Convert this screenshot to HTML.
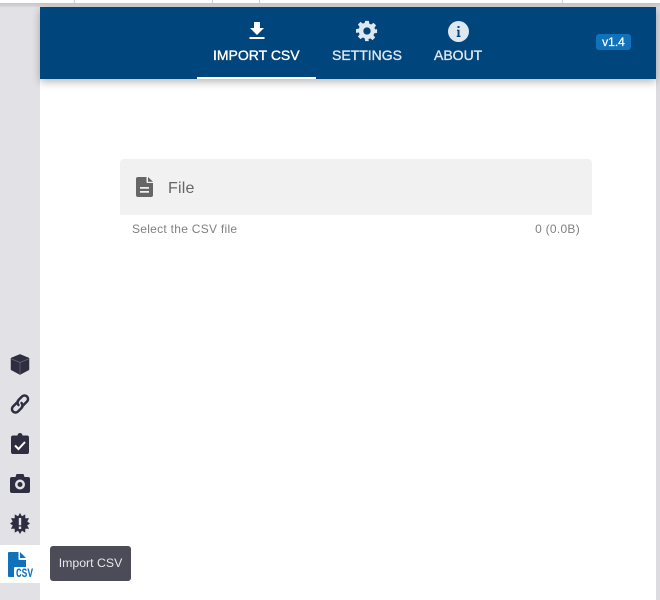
<!DOCTYPE html>
<html>
<head>
<meta charset="utf-8">
<style>
html,body{margin:0;padding:0;width:660px;height:600px;overflow:hidden;background:#e1e1e6;font-family:"Liberation Sans",sans-serif}
.abs{position:absolute}
#top{left:0;top:0;width:660px;height:3px;background:#fff}
#topshadow{left:0;top:3px;width:660px;height:4px;background:linear-gradient(#c6c6c8,#d8d8dc)}
.vl{position:absolute;top:0;width:1px;height:3px;background:#d0d0d0}
#main{left:40px;top:7px;width:616px;height:593px;background:#fff}
#rb{left:656px;top:7px;width:4px;height:593px;background:#dcdce0}
#nav{left:40px;top:7px;width:616px;height:72px;background:#00457c;box-shadow:0 3px 8px rgba(0,0,0,.28)}
.tab{position:absolute;top:47px;font-size:14px;font-weight:normal;-webkit-text-stroke:.35px currentColor;line-height:16px;white-space:nowrap;color:#dfe7ef}
#ul{left:197px;top:77px;width:119px;height:2px;background:#fff}
#badge{left:596px;top:34px;width:35px;height:16px;background:#0f72ba;border-radius:3px;color:#fff;font-size:12px;-webkit-text-stroke:.25px #fff;line-height:16px;text-align:center}
#card{left:120px;top:159px;width:472px;height:56px;background:#f1f1f1;border-radius:4px 4px 0 0}
.sm{font-size:12px;color:#808080;line-height:14px;white-space:nowrap;letter-spacing:.28px}
#tip{left:50px;top:546px;width:81px;height:35px;background:#4c4b58;border-radius:3px;color:#e8e8ea;font-size:12.300px;line-height:35px;text-align:center;white-space:nowrap}
#act{left:0;top:545px;width:40px;height:38px;background:#fff}
svg{position:absolute;display:block}
</style>
</head>
<body>
<div id="top" class="abs">
<div class="vl" style="left:74px"></div><div class="vl" style="left:212px"></div><div class="vl" style="left:259px"></div><div class="vl" style="left:562px"></div>
</div>
<div id="topshadow" class="abs"></div>
<div id="main" class="abs"></div>
<div id="rb" class="abs"></div>
<div id="nav" class="abs"></div>

<svg style="left:248px;top:22px" width="18" height="18" viewBox="0 0 18 18"><path fill="#fff" d="M6 0h6v6h4l-7 7-7-7h4z"/><rect x="1.500" y="15" width="15" height="2" fill="#fff"/></svg>
<div class="tab abs" style="left:213px;color:#fff">IMPORT CSV</div>
<div id="ul" class="abs"></div>

<svg style="left:356px;top:20px" width="22" height="22" viewBox="0 0 24 24"><path fill="#dfe7ef" fill-rule="evenodd" d="M10 1h4l.6 3.100 1.900.8 2.600-1.800 2.800 2.800-1.800 2.600.8 1.900L23 10v4l-3.100.6-.8 1.900 1.800 2.600-2.800 2.800-2.600-1.800-1.900.8L14 23h-4l-.6-3.100-1.900-.8-2.600 1.800-2.800-2.800 1.800-2.600-.8-1.900L0 14v-4l3.100-.6.800-1.900L2.100 4.900l2.800-2.800 2.600 1.800 1.900-.8zM12 8a4 4 0 1 0 0 8 4 4 0 0 0 0-8z"/></svg>
<div class="tab abs" style="left:332px">SETTINGS</div>

<svg style="left:448px;top:21px" width="21" height="21" viewBox="0 0 21 21"><circle cx="10.500" cy="10.500" r="10.500" fill="#dfe7ef"/><rect x="9.500" y="5" width="2" height="2" fill="#00457c"/><path fill="#00457c" d="M9 8.800h2.500v6H12.500v1.200H8.700v-1.200h.9v-4.800H9z"/></svg>
<div class="tab abs" style="left:434px">ABOUT</div>

<div id="badge" class="abs">v1.4</div>

<div id="card" class="abs"></div>
<svg style="left:136px;top:177px" width="17" height="20" viewBox="0 0 17 20"><path fill="#666" fill-rule="evenodd" d="M2 0h8.500v5a1 1 0 0 0 1 1H17v12a2 2 0 0 1-2 2H2a2 2 0 0 1-2-2V2a2 2 0 0 1 2-2zM4 10v1.700h9V10zM4 14v1.700h9V14z"/><path fill="#666" d="M12 0l5 4.800h-5z"/></svg>
<div class="abs" style="left:168px;top:179px;font-size:16px;line-height:19px;color:#666;letter-spacing:.2px">File</div>
<div class="abs sm" style="left:132px;top:222px">Select the CSV file</div>
<div class="abs sm" style="right:80px;top:222px">0 (0.0B)</div>

<svg style="left:10px;top:354px" width="20" height="21" viewBox="0 0 20 21"><path fill="#2f2e41" stroke="#2f2e41" stroke-width="1.500" stroke-linejoin="round" d="M10 1l8.500 3.500v11L10 20l-8.500-4.500v-11z"/><path fill="none" stroke="#6a6976" stroke-width=".7" d="M1.500 5L10 8.500 18.500 5M10 8.500V20"/></svg>
<svg style="left:9px;top:393px" width="22" height="22" viewBox="0 0 22 22" fill="none" stroke="#2f2e41" stroke-width="2.500" stroke-linecap="round"><path d="M9 8.500l-5 5a3.500 3.500 0 0 0 5 5l3.500-3.500a3.500 3.500 0 0 0 0-5"/><path d="M13 13.500l5-5a3.500 3.500 0 0 0-5-5L9.500 7a3.500 3.500 0 0 0 0 5"/></svg>
<svg style="left:11px;top:433px" width="18" height="21" viewBox="0 0 18 21"><path fill="#2f2e41" d="M2 2.500h4.500a2.500 2.500 0 0 1 5 0H16a2 2 0 0 1 2 2V19a2 2 0 0 1-2 2H2a2 2 0 0 1-2-2V4.500a2 2 0 0 1 2-2z"/><path fill="none" stroke="#fff" stroke-width="2" d="M4 12.500l3.500 3.500L14 9"/></svg>
<svg style="left:10px;top:474px" width="20" height="19" viewBox="0 0 20 19"><path fill="#2f2e41" fill-rule="evenodd" d="M2 3h3.500l1-3h7l1 3H18a2 2 0 0 1 2 2v12a2 2 0 0 1-2 2H2a2 2 0 0 1-2-2V5a2 2 0 0 1 2-2zM10 5.500a5 5 0 1 0 0 10 5 5 0 0 0 0-10zM10 8a2.500 2.500 0 1 1 0 5 2.500 2.500 0 0 1 0-5z"/></svg>
<svg style="left:10px;top:513px" width="20" height="21" viewBox="0 0 20 21"><path fill="#2f2e41" fill-rule="evenodd" d="M20 10.500L17.240 12.440 19.090 15.750 15.300 15.800 15.250 19.590 11.940 17.740 10 21 8.060 17.740 4.750 19.590 4.700 15.800 .91 15.750 2.760 12.440 0 10.500 2.760 8.560 .91 5.250 4.700 5.200 4.750 1.410 8.060 3.260 10 0 11.940 3.260 15.250 1.410 15.300 5.200 19.090 5.250 17.240 8.560zM8.800 5v7.300h2.400V5zM8.800 13.500V16h2.400v-2.500z"/></svg>

<div id="act" class="abs"></div>
<svg style="left:8px;top:552px" width="26" height="26" viewBox="0 0 26 26"><path fill="#0f72ba" d="M1 0h9.500v7a1 1 0 0 0 1 1H18v7H7a1 1 0 0 0-1 1v9H1a1 1 0 0 1-1-1V1a1 1 0 0 1 1-1z"/><path fill="#0f72ba" d="M12 0l6 6h-6z"/><text x="8" y="25" font-family="'Liberation Mono',monospace" font-weight="bold" font-size="13" fill="#0f72ba" textLength="17" lengthAdjust="spacingAndGlyphs">CSV</text></svg>
<div id="tip" class="abs">Import CSV</div>
</body>
</html>
